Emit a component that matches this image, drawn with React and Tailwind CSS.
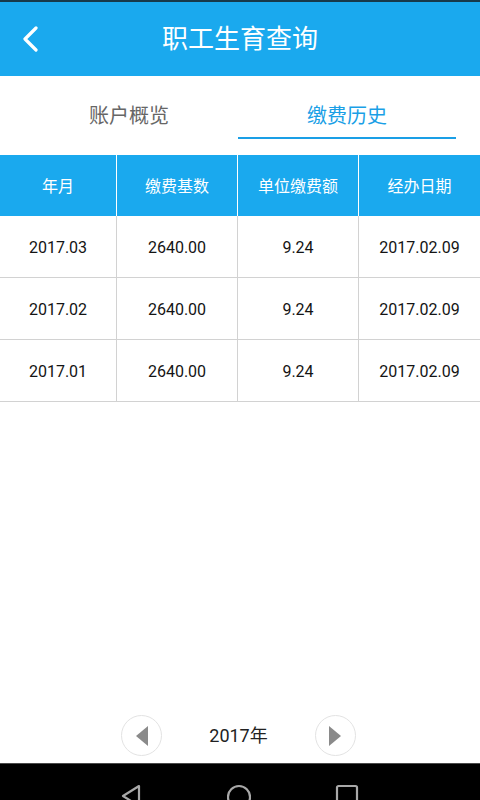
import { useState } from 'react'

const ROWS = [
  { month: '2017.03', base: '2640.00', amount: '9.24', date: '2017.02.09' },
  { month: '2017.02', base: '2640.00', amount: '9.24', date: '2017.02.09' },
  { month: '2017.01', base: '2640.00', amount: '9.24', date: '2017.02.09' },
]

const COLS = ['年月', '缴费基数', '单位缴费额', '经办日期']
const WIDTHS = ['w-[117px] border-r', 'w-[121px] border-r', 'w-[121px] border-r', 'w-[121px]']

const font = { fontFamily: 'Roboto, "Noto Sans CJK SC", sans-serif' }

export default function App() {
  const [tab, setTab] = useState('history')

  return (
    <div className="w-[480px] h-[800px] flex flex-col bg-white overflow-hidden" style={font}>
      {/* status strip */}
      <div className="h-[2px] bg-[#17394a]" />

      {/* header */}
      <div className="h-[74px] bg-[#1aa9ee] flex items-center">
        <button className="ml-[20px] w-[22px] h-[26px]">
          <svg width="22" height="26" viewBox="0 0 22 26" fill="none">
            <path d="M16 2 L5 13 L16 24" stroke="white" strokeWidth="3.2" strokeLinecap="round" strokeLinejoin="round" />
          </svg>
        </button>
        <h1 className="flex-1 text-center text-white text-[26px] leading-none pr-[42px]">职工生育查询</h1>
      </div>

      {/* tabs */}
      <div className="h-[79px] flex pl-[20px] pr-[24px]">
        <button
          onClick={() => setTab('overview')}
          className={`flex-1 h-[63px] pt-[26px] pb-[7px] text-[20px] leading-[28px] border-b-2 ${
            tab === 'overview' ? 'border-[#1a9fe6] text-[#1a9fe6]' : 'border-transparent text-[#666666]'
          }`}
        >
          账户概览
        </button>
        <button
          onClick={() => setTab('history')}
          className={`flex-1 h-[63px] pt-[26px] pb-[7px] text-[20px] leading-[28px] border-b-2 ${
            tab === 'history' ? 'border-[#1a9fe6] text-[#1a9fe6]' : 'border-transparent text-[#666666]'
          }`}
        >
          缴费历史
        </button>
      </div>

      {/* table */}
      <div className="flex h-[61px] bg-[#1aa9ee]">
        {COLS.map((c, i) => (
          <div key={c} className={`${WIDTHS[i]} border-white flex items-center justify-center pt-[3px] text-white text-[16px]`}>
            {c}
          </div>
        ))}
      </div>
      {ROWS.map(r => (
        <div key={r.month} className="flex h-[62px] border-b border-[#d2d2d2]">
          {[r.month, r.base, r.amount, r.date].map((v, i) => (
            <div key={i} className={`${WIDTHS[i]} border-[#d2d2d2] flex items-center justify-center pt-[2px] text-[#141414] text-[16px]`}>
              {v}
            </div>
          ))}
        </div>
      ))}

      <div className="flex-1" />

      {/* year pager */}
      <div className="h-[41px] mb-[7px] pr-[3px] flex items-center justify-center gap-[47px]">
        <button className="w-[41px] h-[41px] rounded-full border border-[#e3e3e3] flex items-center justify-center">
          <svg width="16" height="22" viewBox="0 0 16 22">
            <path d="M14 1 L2 11 L14 21 Z" fill="#8a8a8a" />
          </svg>
        </button>
        <span className="text-[18px] text-[#222222] leading-none">2017年</span>
        <button className="w-[41px] h-[41px] rounded-full border border-[#e3e3e3] flex items-center justify-center">
          <svg width="16" height="22" viewBox="0 0 16 22">
            <path d="M2 1 L14 11 L2 21 Z" fill="#8a8a8a" />
          </svg>
        </button>
      </div>

      {/* android nav bar */}
      <div className="h-[37px] bg-black border-t border-[#4a4a4a] overflow-hidden flex justify-center gap-[84px] pt-[20px] pr-[3px]">
        <svg width="24" height="24" viewBox="0 0 24 24" fill="none" className="shrink-0">
          <path d="M20 2 L4 12 L20 22 Z" stroke="#a8a8a8" strokeWidth="2.2" strokeLinejoin="round" />
        </svg>
        <svg width="24" height="24" viewBox="0 0 24 24" fill="none" className="shrink-0">
          <circle cx="12" cy="13" r="11" stroke="#a8a8a8" strokeWidth="2.2" />
        </svg>
        <svg width="24" height="24" viewBox="0 0 24 24" fill="none" className="shrink-0">
          <rect x="2" y="2" width="20" height="20" rx="1.5" stroke="#a8a8a8" strokeWidth="2.2" />
        </svg>
      </div>
    </div>
  )
}
